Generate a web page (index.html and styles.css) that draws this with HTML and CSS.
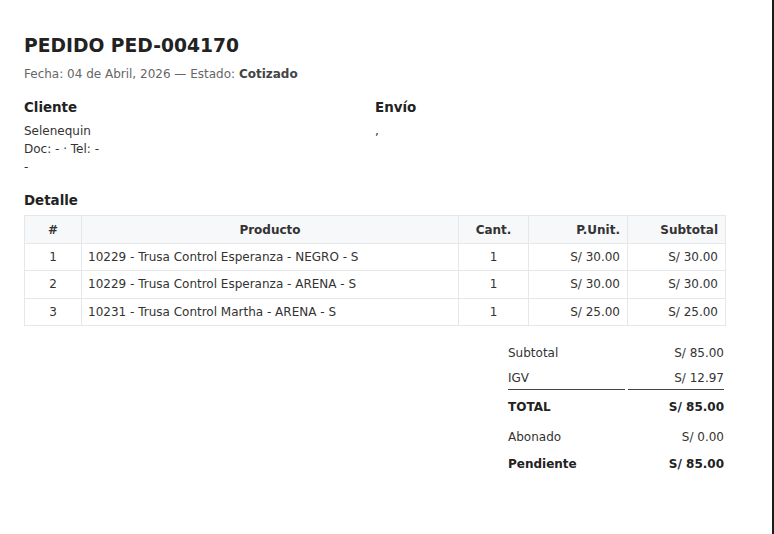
FILE: index.html
```html
<!DOCTYPE html>
<html lang="es">
<head>
<meta charset="utf-8">
<title>Pedido PED-004170</title>
<link rel="stylesheet" href="styles.css">
</head>
<body>
<div class="page">
  <h1 class="title">PEDIDO PED-004170</h1>
  <p class="meta">Fecha: 04 de Abril, 2026 — Estado: <strong>Cotizado</strong></p>

  <div class="parties">
    <section class="party">
      <h2 class="section-title">Cliente</h2>
      <div class="party-lines">
        <div>Selenequin</div>
        <div>Doc: - · Tel: -</div>
        <div>-</div>
      </div>
    </section>
    <section class="party">
      <h2 class="section-title">Envío</h2>
      <div class="party-lines">
        <div>,</div>
      </div>
    </section>
  </div>

  <h2 class="section-title detail-title">Detalle</h2>
  <table class="items">
    <thead>
      <tr>
        <th class="c-num">#</th>
        <th class="c-prod">Producto</th>
        <th class="c-qty">Cant.</th>
        <th class="c-price">P.Unit.</th>
        <th class="c-sub">Subtotal</th>
      </tr>
    </thead>
    <tbody>
      <tr>
        <td class="c-num">1</td>
        <td class="c-prod left">10229 - Trusa Control Esperanza - NEGRO - S</td>
        <td class="c-qty">1</td>
        <td class="c-price">S/ 30.00</td>
        <td class="c-sub">S/ 30.00</td>
      </tr>
      <tr>
        <td class="c-num">2</td>
        <td class="c-prod left">10229 - Trusa Control Esperanza - ARENA - S</td>
        <td class="c-qty">1</td>
        <td class="c-price">S/ 30.00</td>
        <td class="c-sub">S/ 30.00</td>
      </tr>
      <tr>
        <td class="c-num">3</td>
        <td class="c-prod left">10231 - Trusa Control Martha - ARENA - S</td>
        <td class="c-qty">1</td>
        <td class="c-price">S/ 25.00</td>
        <td class="c-sub">S/ 25.00</td>
      </tr>
    </tbody>
  </table>

  <div class="totals-wrap">
    <table class="totals">
      <tr><td class="lbl">Subtotal</td><td class="amt">S/ 85.00</td></tr>
      <tr class="igv"><td class="lbl">IGV</td><td class="amt">S/ 12.97</td></tr>
      <tr class="grand"><td class="lbl">TOTAL</td><td class="amt">S/ 85.00</td></tr>
      <tr class="paid"><td class="lbl">Abonado</td><td class="amt">S/ 0.00</td></tr>
      <tr class="due"><td class="lbl">Pendiente</td><td class="amt">S/ 85.00</td></tr>
    </table>
  </div>
</div>
</body>
</html>
```

FILE: styles.css
```css
html {
  background: #1c1c1c;
}
body {
  margin: 0;
  width: 772px;
  min-height: 534px;
  background: #ffffff;
  font-family: "DejaVu Sans", "Liberation Sans", sans-serif;
  font-size: 12px;
  color: #333333;
}
.page {
  padding: 33px 48px 24px 24px;
}
.title {
  margin: 0;
  font-size: 18.7px;
  line-height: 25px;
  font-weight: bold;
  color: #222222;
}
.meta {
  margin: 8px 0 0;
  font-size: 12px;
  line-height: 16px;
  color: #666666;
}
.meta strong {
  color: #444444;
}
.parties {
  display: grid;
  grid-template-columns: 1fr 1fr;
  column-gap: 2px;
  margin-top: 17px;
}
.section-title {
  margin: 0;
  font-size: 13.4px;
  line-height: 18px;
  font-weight: bold;
  color: #222222;
}
.party-lines {
  margin-top: 5px;
  line-height: 18px;
  color: #333333;
}
.detail-title {
  margin-top: 16px;
}
.items {
  margin-top: 5px;
  width: 702px;
  border-collapse: collapse;
}
.items th,
.items td {
  border: 1px solid #e5e7eb;
  padding: 6px 7px;
  line-height: 14.33px;
}
.items th {
  background: #f7f8fa;
  font-weight: bold;
  color: #333333;
  padding-top: 7px;
  padding-bottom: 6px;
  line-height: 14px;
}
.items td {
  color: #333333;
}
.c-num { width: 42px; text-align: center; }
.c-prod { text-align: center; }
.items td.left { text-align: left; padding-left: 6px; }
.c-qty { width: 55px; text-align: center; }
.c-price { width: 84px; text-align: right; }
.c-sub { width: 83px; text-align: right; }

.totals-wrap {
  display: flex;
  justify-content: flex-end;
  margin-top: 15px;
}
.totals {
  border-collapse: separate;
  border-spacing: 3px 0;
  margin-right: -3px;
}
.totals td {
  padding: 4px 0 5px 0;
  line-height: 16px;
  color: #333333;
}
.totals td.lbl {
  width: 117px;
}
.totals td.amt {
  width: 96px;
  text-align: right;
}
.totals .igv td {
  border-bottom: 1px solid #444444;
  padding-bottom: 3px;
}
.totals .grand td {
  font-weight: bold;
  padding-top: 9px;
  padding-bottom: 6px;
  color: #222222;
}
.totals .paid td {
  padding-top: 8px;
}
.totals .due td {
  font-weight: bold;
  color: #222222;
  padding-top: 6px;
}
```
